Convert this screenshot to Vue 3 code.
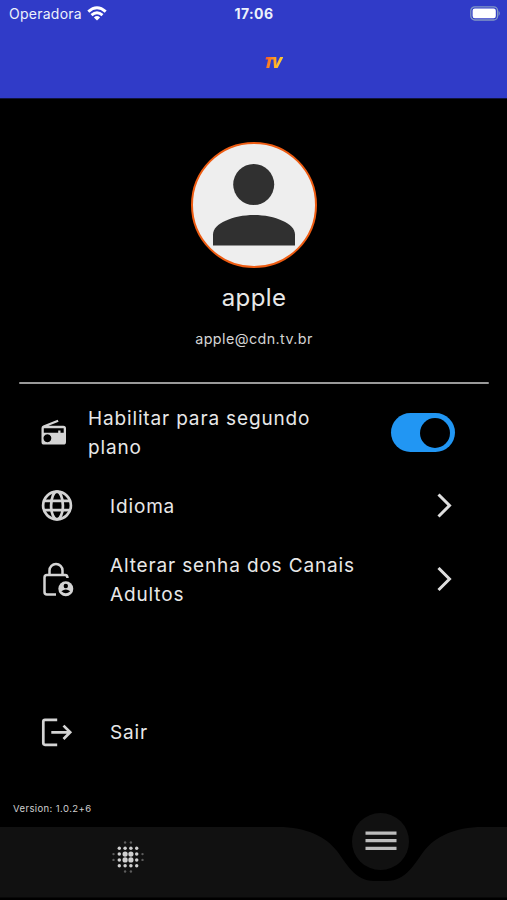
<script setup>
import { ref } from 'vue'

const background = ref(true)

// Halftone dots on a 6px grid: [x, y, radius, opacity]
const dots = []
const radii = { 0.5: { 0.5: 2.6, 1.5: 1.75, 2.5: 1.2 }, 1.5: { 0.5: 1.75, 1.5: 1.7, 2.5: 0 }, 2.5: { 0.5: 1.2, 1.5: 0, 2.5: 0 } }
for (let y = -2.5; y <= 2.5; y++) {
  for (let x = -2.5; x <= 2.5; x++) {
    const r = radii[Math.abs(x)][Math.abs(y)]
    if (r) dots.push({ x: 16 + x * 5.8, y: 16 + y * 5.8, r, o: r < 1.3 ? 0.4 : 1 })
  }
}
</script>

<template>
  <main class="screen">
    <header class="top">
      <div class="status">
        <div class="carrier">
          <span>Operadora</span>
          <svg width="20" height="15" viewBox="0 0 20 15" fill="none" stroke="#fff" stroke-width="2.9">
            <path d="M1.3 5.6Q10-2.2 18.700 5.600" />
            <path d="M4.500 9.100Q10 4.200 15.500 9.100" />
            <path d="M6.900 11.400Q10 8.800 13.100 11.400L10 14.600Z" fill="#fff" stroke="none" />
          </svg>
        </div>
        <span class="clock">17:06</span>
        <svg class="battery" width="31" height="15" viewBox="0 0 31 15">
          <rect x=".8" y=".8" width="26.800" height="13.200" rx="4" fill="none" stroke="#8298c4" stroke-width="1.300" />
          <rect x="2.600" y="2.600" width="23.200" height="9.600" rx="2.200" fill="#fff" />
          <path d="M28.600 4.800Q31 7.400 28.600 10Z" fill="#8298c4" />
        </svg>
      </div>
      <div class="brand"><span class="logo">TV</span></div>
    </header>

    <section class="profile">
      <div class="avatar">
        <svg width="122" height="122" viewBox="0 0 122 122" fill="#303030">
          <circle cx="60.700" cy="40.500" r="20.500" />
          <path d="M20 101.500V90.500C20 79.500 40 71 61 71S102 79.500 102 90.500V101.500Z" />
        </svg>
      </div>
      <h1>apple</h1>
      <p>apple@cdn.tv.br</p>
    </section>

    <hr />

    <section class="menu">
      <div class="row compact">
        <svg class="icon" width="32" height="32" viewBox="0 0.500 32 32">
          <path fill="#d4d4d4" fill-rule="evenodd" d="M17.700 3.200 18.600 5.200 8.500 9.200H23.400Q26 9.200 26 11.800V25.400Q26 28 23.400 28H4Q1.500 28 1.500 25.400V11.500Q1.500 9.700 3.200 9ZM3.800 11.800V16.200H18.200V14H20.500V16.200H23.700V11.800ZM7.400 17.700A4 4 0 1 0 7.410 17.700Z" />
        </svg>
        <span class="label">Habilitar para segundo<br />plano</span>
        <button class="toggle" :class="{ on: background }" aria-label="Habilitar para segundo plano" @click="background = !background"><i></i></button>
      </div>
      <div class="row">
        <svg class="icon" width="34" height="32" viewBox="-1 0.500 34 32" fill="none" stroke="#d4d4d4" stroke-width="2.700">
          <circle cx="16" cy="16" r="13.900" />
          <ellipse cx="16" cy="16" rx="5.900" ry="13.900" />
          <path d="M3.400 11.300H28.600M3.400 20.700H28.600" />
        </svg>
        <span class="label">Idioma</span>
        <svg class="arrow" width="18" height="26" viewBox="0 0.500 18 26"><path d="M2.500 2 13.500 13 2.500 24" /></svg>
      </div>
      <div class="row">
        <svg class="icon" width="34" height="36" viewBox="0 1 34 36" fill="none" stroke="#d4d4d4" stroke-width="2.500">
          <path d="M16 33.500H7Q4.500 33.500 4.500 31V16.500Q4.500 14 7 14H25Q27.500 14 27.500 17M9.500 14V9.500A6.500 6.500 0 0 1 22.500 9.500V14" />
          <circle cx="25.800" cy="27.800" r="7.500" fill="#d4d4d4" stroke="none" />
          <circle cx="25.800" cy="25" r="2.200" fill="#000" stroke="none" />
          <path d="M21.400 30.200Q25.800 27 30.200 30.200Q25.800 34.500 21.400 30.200Z" fill="#000" stroke="none" />
        </svg>
        <span class="label">Alterar senha dos Canais<br />Adultos</span>
        <svg class="arrow" width="18" height="26" viewBox="0 1 18 26"><path d="M2.500 2 13.500 13 2.500 24" /></svg>
      </div>
      <div class="row exit">
        <svg class="icon" width="34" height="32" viewBox="0 0.700 34 32" fill="none" stroke="#d4d4d4" stroke-width="2.700">
          <path d="M17.200 3.500H5Q3.300 3.500 3.300 5.200V26.800Q3.300 28.500 5 28.500H17.200" />
          <path d="M11.300 16H30.500M23.500 9.300 30.200 16 23.500 22.700" />
        </svg>
        <span class="label">Sair</span>
      </div>
    </section>

    <p class="version">Version: 1.0.2+6</p>

    <nav class="tabs">
      <svg class="surface" width="507" height="71" viewBox="0 0 507 71">
        <path fill="#111" d="M0 0H278C307 0 326 10 337 24C346 36 355 54 374 54H387C406 54 415 36 424 24C435 10 454 0 483 0H507V70.500H0Z" />
      </svg>
      <svg class="dots" width="32" height="32" viewBox="0 0 32 32" fill="#d0d0d0">
        <circle v-for="(d, i) in dots" :key="i" :cx="d.x" :cy="d.y" :r="d.r" :opacity="d.o" />
      </svg>
      <button class="fab" aria-label="Menu">
        <svg width="32" height="20" viewBox="0 0 32 20" fill="#bdbdbd">
          <path d="M.5 .5H31.500V3.700H.5ZM.5 8.100H31.500V11.300H.5ZM.5 15.700H31.500V18.900H.5Z" />
        </svg>
      </button>
    </nav>
  </main>
</template>

<style>
body {
  margin: 0;
  background: #000;
}
</style>

<style scoped>
.screen {
  box-sizing: border-box;
  width: 507px;
  height: 900px;
  display: flex;
  flex-direction: column;
  overflow: hidden;
  background: #000;
  color: #e8e8e8;
  font-family: Inter, "Liberation Sans", sans-serif;
}
svg { display: block; flex: none; }
.top {
  height: 99px;
  flex: none;
  background: #303bc8;
  border-bottom: 1px solid #10143f;
  box-sizing: border-box;
}
.status {
  display: grid;
  grid-template-columns: 1fr auto 1fr;
  align-items: center;
  height: 28px;
  padding: 0 6px 0 9px;
  color: #edf2fb;
  font-size: 14px;
}
.carrier {
  display: flex;
  align-items: center;
  gap: 5px;
  letter-spacing: 0.25px;
  margin-top: -1px;
}
.carrier svg { margin-top: -1px; }
.clock {
  margin: -1px 2px 0 0;
  font-weight: 700;
  letter-spacing: 0.4px;
}
.battery { justify-self: end; margin-top: -1px; }
.brand {
  display: flex;
  justify-content: center;
  padding: 24px 0 0 38px;
}
.logo {
  padding: 0 2px;
  font: italic 800 16.500px/20px "Open Sans", sans-serif;
  letter-spacing: -1.4px;
  color: transparent;
  background: linear-gradient(110deg, #f4552c 20%, #ff9a1f 50%, #ffd437 85%);
  -webkit-background-clip: text;
  background-clip: text;
}
.profile {
  display: flex;
  flex-direction: column;
  align-items: center;
  padding-top: 43px;
}
.avatar {
  width: 122px;
  height: 122px;
  overflow: hidden;
  border: 2.500px solid #ee5c12;
  border-radius: 50%;
  background: #eee;
}
h1 {
  margin: 15px 0 0;
  padding-left: 1px;
  font-size: 24px;
  font-weight: 400;
  line-height: 30px;
  letter-spacing: 0.4px;
}
.profile p {
  margin: 16px 0 0;
  padding-left: 1px;
  color: #d4d4d4;
  font-size: 14.300px;
  line-height: 20px;
  letter-spacing: 0.42px;
}
hr {
  width: 470px;
  height: 2px;
  flex: none;
  margin: 33px auto 0 19px;
  border: 0;
  border-radius: 1px;
  background: #999;
}
.menu {
  padding: 19px 50px 0 40px;
}
.row {
  display: grid;
  grid-template-columns: 34px 1fr auto;
  column-gap: 36px;
  align-items: center;
  height: 59px;
  margin-bottom: 14.500px;
}
.row.compact { column-gap: 14px; padding-right: 2px; }
.row.exit { margin-top: 94px; }
.label {
  padding-top: 1px;
  font-size: 19px;
  line-height: 29.200px;
  letter-spacing: 0.85px;
  white-space: nowrap;
}
.arrow {
  margin-right: 3px;
  fill: none;
  stroke: #dedede;
  stroke-width: 3;
}
.toggle {
  display: flex;
  align-items: center;
  width: 64px;
  height: 39px;
  padding: 0 5px;
  border: 0;
  border-radius: 20px;
  background: #555;
}
.toggle i {
  width: 30px;
  height: 30px;
  border-radius: 50%;
  background: #000;
}
.toggle.on {
  justify-content: flex-end;
  background: #2196f3;
}
.version {
  margin: 26px 0 0 13px;
  color: #cfcfcf;
  font-size: 9.500px;
  line-height: 12px;
  letter-spacing: 0.4px;
}
.tabs {
  position: relative;
  flex: none;
  height: 73px;
  margin-top: auto;
}
.dots {
  position: absolute;
  left: 112px;
  top: 14px;
}
.fab {
  position: absolute;
  left: 352px;
  top: -14px;
  display: flex;
  align-items: center;
  justify-content: center;
  width: 57px;
  height: 57px;
  padding: 0 0 2px;
  border: 0;
  border-radius: 50%;
  background: #111;
}
</style>
